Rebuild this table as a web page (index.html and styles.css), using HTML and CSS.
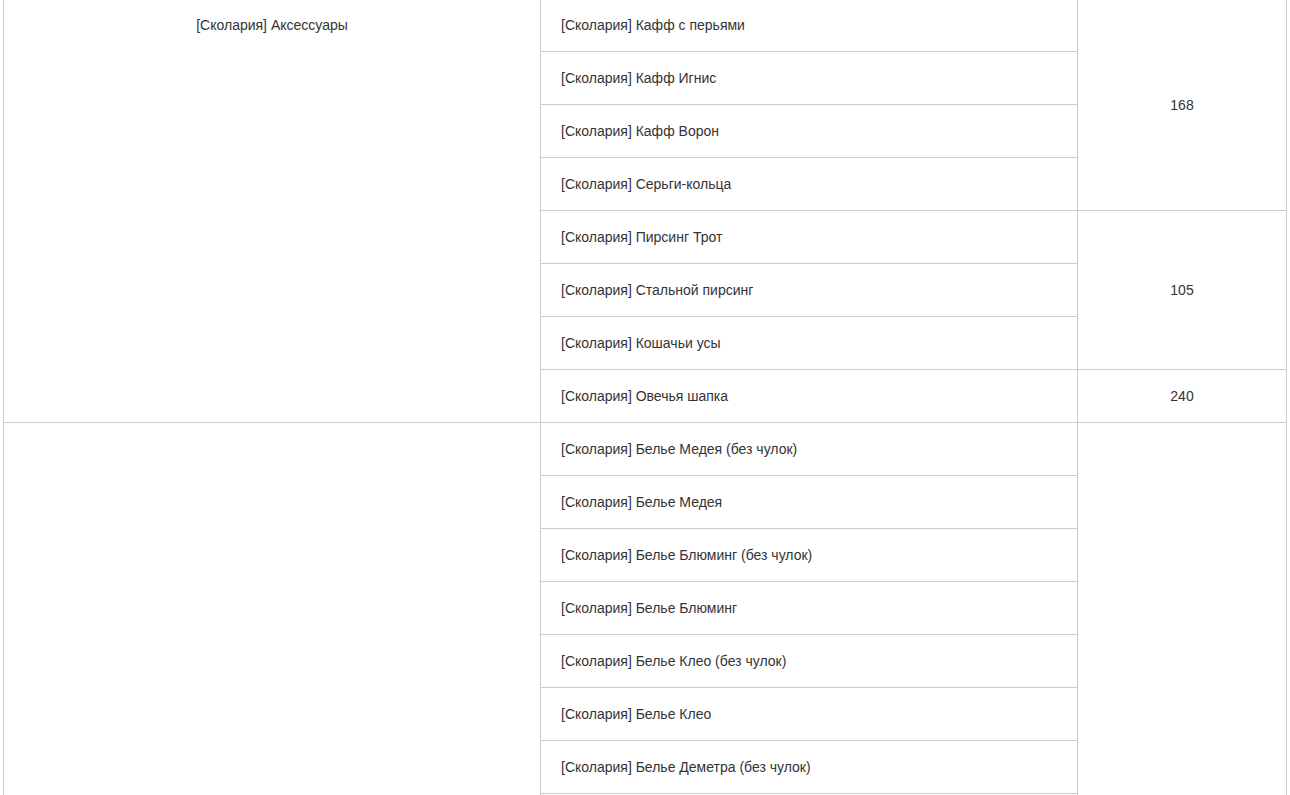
FILE: index.html
```html
<!DOCTYPE html>
<html lang="ru">
<head>
<meta charset="utf-8">
<title>Сколария</title>
<link rel="stylesheet" href="styles.css">
</head>
<body>
<div class="wrap">
<table class="items">
  <colgroup>
    <col class="c-group">
    <col class="c-name">
    <col class="c-price">
  </colgroup>
  <tbody>
    <tr>
      <td class="group" rowspan="8">[Сколария] Аксессуары</td>
      <td class="name">[Сколария] Кафф с перьями</td>
      <td class="price" rowspan="4">168</td>
    </tr>
    <tr><td class="name">[Сколария] Кафф Игнис</td></tr>
    <tr><td class="name">[Сколария] Кафф Ворон</td></tr>
    <tr><td class="name">[Сколария] Серьги-кольца</td></tr>
    <tr>
      <td class="name">[Сколария] Пирсинг Трот</td>
      <td class="price" rowspan="3">105</td>
    </tr>
    <tr><td class="name">[Сколария] Стальной пирсинг</td></tr>
    <tr><td class="name">[Сколария] Кошачьи усы</td></tr>
    <tr>
      <td class="name">[Сколария] Овечья шапка</td>
      <td class="price">240</td>
    </tr>
    <tr>
      <td class="group" rowspan="9"></td>
      <td class="name">[Сколария] Белье Медея (без чулок)</td>
      <td class="price" rowspan="9"></td>
    </tr>
    <tr><td class="name">[Сколария] Белье Медея</td></tr>
    <tr><td class="name">[Сколария] Белье Блюминг (без чулок)</td></tr>
    <tr><td class="name">[Сколария] Белье Блюминг</td></tr>
    <tr><td class="name">[Сколария] Белье Клео (без чулок)</td></tr>
    <tr><td class="name">[Сколария] Белье Клео</td></tr>
    <tr><td class="name">[Сколария] Белье Деметра (без чулок)</td></tr>
    <tr><td class="name">[Сколария] Белье Деметра</td></tr>
    <tr><td class="name">[Сколария] Белье Астра (без чулок)</td></tr>
  </tbody>
</table>
</div>
</body>
</html>
```

FILE: styles.css
```css
html, body {
  margin: 0;
  padding: 0;
  background: #fff;
  overflow: hidden;
}

.wrap {
  padding-left: 3px;
  margin-top: -2px;
}

.items {
  width: 1283px;
  border-collapse: collapse;
  table-layout: fixed;
  font-family: "Liberation Sans", Arial, sans-serif;
  font-size: 14px;
  line-height: 20px;
  color: #333;
}

.c-group { width: 537px; }
.c-name { width: 537px; }
.c-price { width: 209px; }

.items td {
  border: 1px solid #ccc;
  padding: 16px 20px;
}

.items td.group {
  text-align: center;
  vertical-align: top;
}

.items td.name {
  text-align: left;
  vertical-align: middle;
}

.items td.price {
  text-align: center;
  vertical-align: middle;
}
```
